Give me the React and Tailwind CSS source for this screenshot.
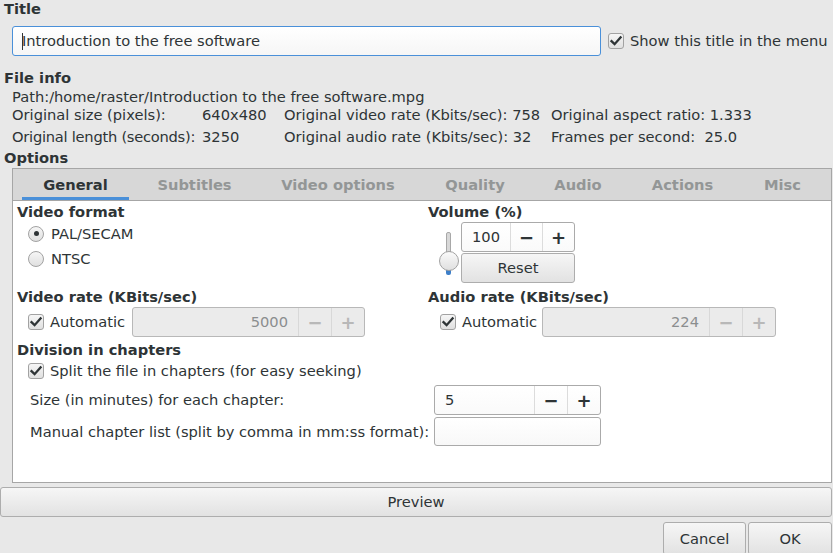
import React from 'react'

const font = "font-['DejaVu_Sans',sans-serif]"

function Check({ checked = true }) {
  return (
    <span className="flex h-[16px] w-[16px] shrink-0 items-center justify-center rounded-[3px] border border-[#a2a2a2] bg-gradient-to-b from-[#f6f6f6] to-[#e0e0e0]">
      {checked && (
        <svg width="14" height="14" viewBox="0 0 14 14">
          <path d="M2.5 7.2 L5.6 10.2 L11.6 3.4" fill="none" stroke="#2e3436" strokeWidth="2.3" strokeLinecap="square" />
        </svg>
      )}
    </span>
  )
}

function Radio({ checked }) {
  return (
    <span className="flex h-[16px] w-[16px] shrink-0 items-center justify-center rounded-full border border-[#a2a2a2] bg-gradient-to-b from-[#f6f6f6] to-[#e0e0e0]">
      {checked && <span className="h-[5px] w-[5px] rounded-full bg-[#2e3436]" />}
    </span>
  )
}

function Spin({ value, width, disabled, align = 'left' }) {
  const txt = disabled ? 'text-[#8b8e8f]' : 'text-[#2e3436]'
  const btn = disabled ? 'text-[#b8b8b8]' : 'text-[#2e3436]'
  return (
    <div
      className={`flex h-[30px] shrink-0 rounded-[3px] border ${disabled ? 'border-[#b8b8b8] bg-[#ebebeb]' : 'border-[#aaaaaa] bg-gradient-to-b from-[#ffffff] to-[#fafafa]'}`}
      style={{ width }}
    >
      <div className={`flex flex-1 items-center px-[10px] ${align === 'right' ? 'justify-end' : ''} ${txt}`}>{value}</div>
      <div className={`flex w-[33px] items-center justify-center border-l ${disabled ? 'border-[#d8d8d8]' : 'border-[#dcdcdc]'} text-[18px] font-bold ${btn}`}>−</div>
      <div className={`flex w-[33px] items-center justify-center border-l ${disabled ? 'border-[#d8d8d8]' : 'border-[#dcdcdc]'} text-[18px] font-bold ${btn}`}>+</div>
    </div>
  )
}

function Button({ children, className }) {
  return (
    <div className={`flex items-center justify-center rounded-[3px] border border-[#adadad] bg-gradient-to-b from-[#f6f6f6] to-[#e2e2e2] text-[#2e3436] ${className}`}>
      {children}
    </div>
  )
}

const tabs = [
  ['General', 'w-[107px]'],
  ['Subtitles', 'w-[117px]'],
  ['Video options', 'w-[156px]'],
  ['Quality', 'w-[104px]'],
  ['Audio', 'w-[88px]'],
  ['Actions', 'w-[107px]'],
  ['Misc', 'w-[79px]'],
]

export default function App() {
  return (
    <div className={`${font} flex h-[553px] w-[833px] flex-col overflow-hidden bg-[#e8e8e8] text-[14.67px] text-[#2e3436]`}>
      <div className="h-[18px] pl-[4px] font-bold leading-[18px]">Title</div>

      <div className="mt-[8px] flex items-center">
        <div className="ml-[12px] flex h-[30px] w-[589px] items-center rounded-[3px] border border-[#4a90d9] bg-gradient-to-b from-[#ffffff] to-[#f6f6f6] pl-[9px]">
          <span className="mr-[-1px] h-[17px] w-[1px] bg-[#2e3436]" />
          <span>Introduction to the free software</span>
        </div>
        <div className="ml-[7px] flex items-center gap-[6px]">
          <Check />
          <span>Show this title in the menu</span>
        </div>
      </div>

      <div className="mt-[13px] h-[18px] pl-[4px] font-bold leading-[18px]">File info</div>
      <div className="mt-[1px] h-[18px] pl-[12px] leading-[18px]">Path:/home/raster/Introduction to the free software.mpg</div>
      <div className="flex h-[18px] whitespace-nowrap pl-[12px] leading-[18px]">
        <span className="w-[190px]">Original size (pixels):</span>
        <span className="w-[82px]">640x480</span>
        <span className="w-[267px]">Original video rate (Kbits/sec): 758</span>
        <span>Original aspect ratio: 1.333</span>
      </div>
      <div className="mt-[4px] flex h-[18px] whitespace-nowrap pl-[12px] leading-[18px]">
        <span className="w-[190px] tracking-[-0.25px]">Original length (seconds):</span>
        <span className="w-[82px]">3250</span>
        <span className="w-[267px]">Original audio rate (Kbits/sec): 32</span>
        <span className="whitespace-pre">Frames per second:  25.0</span>
      </div>
      <div className="mt-[3px] h-[18px] pl-[4px] font-bold leading-[18px]">Options</div>

      <div className="ml-[12px] mt-[1px] flex h-[315px] w-[820px] shrink-0 flex-col border border-[#a6a6a6] bg-white">
        <div className="flex h-[32px] shrink-0 items-stretch gap-[7px] overflow-hidden border-b border-[#a6a6a6] bg-[#d7d7d7] pl-[9px]">
          {tabs.map(([t, w], i) => (
            <div
              key={t}
              className={`flex shrink-0 items-center justify-center whitespace-nowrap border-b-[3px] pt-[3px] font-bold ${w} ${i === 0 ? 'border-[#4a90d9] text-[#2e3436]' : 'border-transparent text-[#939696]'}`}
            >
              {t}
            </div>
          ))}
        </div>

        <div className="flex flex-col pl-[4px]">
          <div className="flex h-[87px]">
            <div className="w-[411px] pt-[2px]">
              <div className="h-[18px] font-bold leading-[18px]">Video format</div>
              <div className="flex h-[25px] items-center gap-[7px] pl-[11px]">
                <Radio checked />
                <span>PAL/SECAM</span>
              </div>
              <div className="flex h-[25px] items-center gap-[7px] pl-[11px]">
                <Radio />
                <span>NTSC</span>
              </div>
            </div>
            <div className="pt-[2px]">
              <div className="h-[18px] font-bold leading-[18px]">Volume (%)</div>
              <div className="mt-[1px] flex">
                <div className="relative w-[33px]">
                  <div className="absolute left-[18px] top-[10px] h-[22px] w-[5px] rounded-t-[2px] border border-[#a8a8a8] bg-[#d8d8d8]" />
                  <div className="absolute left-[18px] top-[48px] h-[5px] w-[5px] rounded-b-[2px] bg-[#3d7fc9]" />
                  <div className="absolute left-[11px] top-[29px] h-[20px] w-[20px] rounded-full border border-[#a2a2a2] bg-gradient-to-b from-[#fafafa] to-[#e0e0e0]" />
                </div>
                <div className="flex flex-col gap-[1px]">
                  <Spin value="100" width={114} />
                  <Button className="h-[30px] w-[114px]">Reset</Button>
                </div>
              </div>
            </div>
          </div>

          <div className="flex">
            <div className="w-[411px]">
              <div className="h-[18px] font-bold leading-[18px]">Video rate (KBits/sec)</div>
              <div className="mt-[1px] flex items-center pl-[11px]">
                <Check />
                <span className="ml-[6px] w-[82px]">Automatic</span>
                <Spin value="5000" width={233} disabled align="right" />
              </div>
            </div>
            <div>
              <div className="h-[18px] font-bold leading-[18px]">Audio rate (KBits/sec)</div>
              <div className="mt-[1px] flex items-center pl-[12px]">
                <Check />
                <span className="ml-[6px] w-[80px]">Automatic</span>
                <Spin value="224" width={234} disabled align="right" />
              </div>
            </div>
          </div>

          <div className="mt-[4px] h-[18px] font-bold leading-[18px]">Division in chapters</div>
          <div className="mt-[3px] flex h-[18px] items-center gap-[6px] pl-[11px]">
            <Check />
            <span>Split the file in chapters (for easy seeking)</span>
          </div>
          <div className="mt-[5px] flex items-center">
            <span className="w-[417px] pl-[13px]">Size (in minutes) for each chapter:</span>
            <Spin value="5" width={167} />
          </div>
          <div className="mt-[2px] flex items-center">
            <span className="w-[417px] whitespace-nowrap pl-[13px]">Manual chapter list (split by comma in mm:ss format):</span>
            <div className="h-[29px] w-[167px] rounded-[3px] border border-[#aaaaaa] bg-gradient-to-b from-[#ffffff] to-[#f8f8f8]" />
          </div>
        </div>
      </div>

      <Button className="mt-[4px] h-[30px] w-[832px] shrink-0">Preview</Button>

      <div className="mt-[5px] flex shrink-0 justify-end gap-[2px] pr-[1px]">
        <Button className="h-[33px] w-[83px]">Cancel</Button>
        <Button className="h-[33px] w-[84px]">OK</Button>
      </div>
    </div>
  )
}
